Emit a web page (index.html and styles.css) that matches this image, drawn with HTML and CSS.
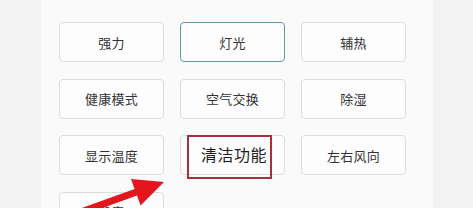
FILE: index.html
```html
<!DOCTYPE html>
<html lang="zh">
<head>
<meta charset="utf-8">
<link rel="stylesheet" href="styles.css">
</head>
<body>
<div class="page">
  <div class="side"></div>
  <div class="panel">
    <div class="grid">
      <div class="btn">强力</div>
      <div class="btn active">灯光</div>
      <div class="btn">辅热</div>
      <div class="btn">健康模式</div>
      <div class="btn">空气交换</div>
      <div class="btn">除湿</div>
      <div class="btn">显示温度</div>
      <div class="btn marked"><span class="big">清洁功能</span><span class="mark"></span></div>
      <div class="btn">左右风向</div>
      <div class="btn">静音</div>
    </div>
  </div>
  <div class="side right"></div>
  <svg class="arrow" width="473" height="208" viewBox="0 0 473 208">
    <polygon points="164,182 131,179 134.6,188.9 68.8,212.7 71.2,219.3 137,195.5 140.6,205.4" fill="#e3151d"/>
  </svg>
</div>
</body>
</html>
```

FILE: styles.css
```css
html, body {
  margin: 0;
  padding: 0;
}
body {
  width: 473px;
  height: 208px;
  overflow: hidden;
  font-family: "Noto Sans CJK SC", "Noto Sans", sans-serif;
  background: #f2f2f2;
}
.page {
  position: relative;
  display: flex;
  width: 473px;
  height: 208px;
  overflow: hidden;
}
.side {
  width: 41px;
  flex: none;
  background: #f3f3f3;
}
.side.right {
  width: 40px;
}
.panel {
  width: 392px;
  flex: none;
  background: #fafafa;
  padding: 22px 0 0 18px;
  box-sizing: border-box;
}
.grid {
  display: grid;
  grid-template-columns: repeat(3, 105px);
  grid-auto-rows: 40px;
  column-gap: 16px;
  row-gap: 16.5px;
}
.btn {
  position: relative;
  box-sizing: border-box;
  border: 1px solid #dcdcdc;
  border-radius: 4px;
  background: #fdfdfd;
  display: flex;
  align-items: center;
  justify-content: center;
  font-size: 13px;
  color: #333;
  letter-spacing: 0.3px;
}
.btn.active {
  border-color: #5f9c9a;
}
.big {
  font-size: 16px;
  color: #1e1e1e;
  margin-left: 3px;
  margin-top: -3px;
  letter-spacing: 0.5px;
}
.mark {
  position: absolute;
  left: 6px;
  top: -1px;
  width: 85px;
  height: 44px;
  box-sizing: border-box;
  border: 2px solid #ab2f38;
}
.arrow {
  position: absolute;
  left: 0;
  top: 0;
}
```
